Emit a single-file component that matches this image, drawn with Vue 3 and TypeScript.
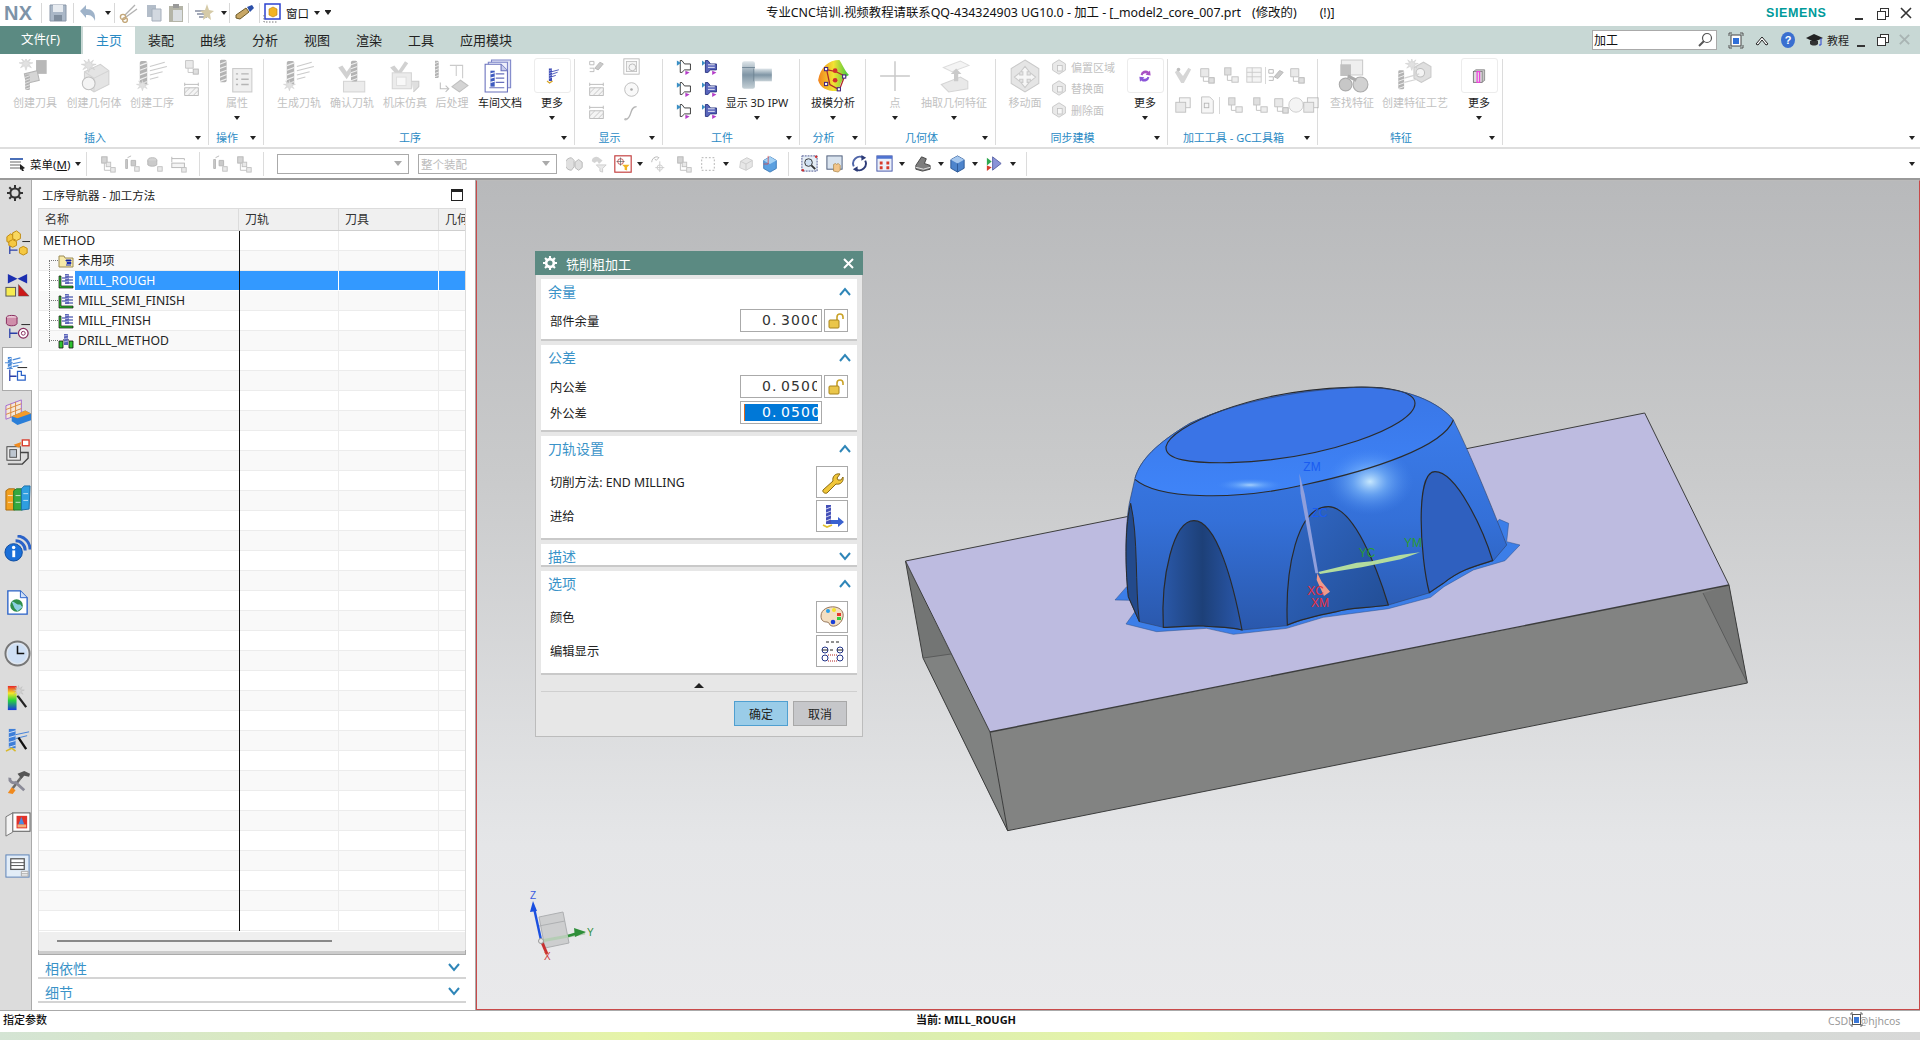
<script setup lang="ts">
type Strip = { i?: string; c?: boolean; s?: boolean; w: number; dim?: boolean }
type Big = { kind: 'big'; label: string; icon: string; w: number; dim?: boolean; caret?: boolean; boxed?: boolean; ml?: number }
type Grid = { kind: 'grid'; icons: string[]; pitch: number; rowH: number; w: number; pl: number; dim?: boolean }
type Side = { kind: 'side'; w: number; rows: { icon: string; text: string }[] }
type Rows = { kind: 'rows'; rows: Strip[][] }
type Group = { label: string; w: number; pl: number; items: (Big | Grid | Side | Rows)[] }

const tabs = ['主页', '装配', '曲线', '分析', '视图', '渲染', '工具', '应用模块']

const quick: Strip[] = [
  { s: true, w: 1 }, { i: 'save', w: 31, dim: true }, { s: true, w: 1 }, { i: 'undo', w: 28, dim: true }, { c: true, w: 12 }, { s: true, w: 1 },
  { i: 'scissors', w: 28, dim: true }, { i: 'copy', w: 21, dim: true }, { i: 'paste', w: 24, dim: true }, { s: true, w: 1 },
  { i: 'starcut', w: 30, dim: true }, { c: true, w: 10 }, { s: true, w: 1 }, { i: 'brush', w: 29 }, { s: true, w: 1 }, { i: 'window', w: 26 },
]

const groups: Group[] = [
  { label: '插入', w: 209, pl: 6, items: [
    { kind: 'big', label: '创建刀具', icon: 'g-tool', w: 58, dim: true },
    { kind: 'big', label: '创建几何体', icon: 'g-geom', w: 60, dim: true },
    { kind: 'big', label: '创建工序', icon: 'g-oper', w: 56, dim: true },
    { kind: 'grid', icons: ['s-node', 's-hatch'], pitch: 22, rowH: 23, w: 22, pl: 0, dim: true },
  ] },
  { label: '操作', w: 55, pl: 2, items: [{ kind: 'big', label: '属性', icon: 'g-prop', w: 52, dim: true, caret: true }] },
  { label: '工序', w: 311, pl: 8, items: [
    { kind: 'big', label: '生成刀轨', icon: 'g-oper', w: 54, dim: true },
    { kind: 'big', label: '确认刀轨', icon: 'g-verify', w: 52, dim: true },
    { kind: 'big', label: '机床仿真', icon: 'g-sim', w: 54, dim: true },
    { kind: 'big', label: '后处理', icon: 'g-post', w: 40, dim: true },
    { kind: 'big', label: '车间文档', icon: 'c-doc', w: 56 },
    { kind: 'big', label: '更多', icon: 'c-moreop', w: 48, boxed: true, caret: true },
  ] },
  { label: '显示', w: 88, pl: 4, items: [
    { kind: 'grid', icons: ['s-screw', 's-frame', 's-hatch', 's-target', 's-hatch', 's-curve'], pitch: 35, rowH: 23, w: 80, pl: 0, dim: true },
  ] },
  { label: '工件', w: 137, pl: 8, items: [
    { kind: 'grid', icons: ['w-a', 'w-b', 'w-a', 'w-b', 'w-a', 'w-b'], pitch: 26, rowH: 22, w: 52, pl: 0 },
    { kind: 'big', label: '显示 3D IPW', icon: 'c-ipw', w: 68, caret: true },
  ] },
  { label: '分析', w: 66, pl: 0, items: [{ kind: 'big', label: '拔模分析', icon: 'c-draft', w: 66, caret: true }] },
  { label: '几何体', w: 130, pl: 4, items: [
    { kind: 'big', label: '点', icon: 'g-plus', w: 50, dim: true, caret: true },
    { kind: 'big', label: '抽取几何特征', icon: 'g-extract', w: 68, dim: true, caret: true },
  ] },
  { label: '同步建模', w: 172, pl: 3, items: [
    { kind: 'big', label: '移动面', icon: 'g-move', w: 52, dim: true },
    { kind: 'side', w: 75, rows: [
      { icon: 's-face', text: '偏置区域' }, { icon: 's-face', text: '替换面' }, { icon: 's-face', text: '删除面' },
    ] },
    { kind: 'big', label: '更多', icon: 'c-sync', w: 38, boxed: true, caret: true },
  ] },
  { label: '加工工具 - GC工具箱', w: 150, pl: 3, items: [
    { kind: 'rows', rows: [
      [{ i: 's-check', w: 24, dim: true }, { i: 's-node', w: 24, dim: true }, { i: 's-tree', w: 23, dim: true }, { i: 's-table', w: 23, dim: true }, { s: true, w: 1 }, { i: 's-screw', w: 20, dim: true }, { i: 's-node', w: 22, dim: true }],
      [{ i: 's-copy', w: 24, dim: true }, { i: 's-sheet', w: 24, dim: true }, { s: true, w: 1 }, { i: 's-tree', w: 29, dim: true }, { i: 's-tree', w: 22, dim: true }, { i: 's-node', w: 20, dim: true }, { i: 's-clock', w: 10, dim: true }, { i: 's-copy', w: 20, dim: true }],
    ] },
  ] },
  { label: '特征', w: 185, pl: 6, items: [
    { kind: 'big', label: '查找特征', icon: 'g-find', w: 56, dim: true },
    { kind: 'big', label: '创建特征工艺', icon: 'g-feat', w: 70, dim: true },
    { kind: 'big', label: '更多', icon: 'c-box', w: 38, boxed: true, caret: true, ml: 10 },
  ] },
]

const tool1: Strip[] = [
  { i: 't-a', w: 25, dim: true }, { i: 't-b', w: 23, dim: true }, { i: 't-c', w: 24, dim: true }, { i: 't-d', w: 24, dim: true },
]
const tool2: Strip[] = [{ i: 't-b', w: 24, dim: true }, { i: 't-a', w: 24, dim: true }]
const tool3: Strip[] = [
  { i: 't-e', w: 24, dim: true }, { i: 't-f', w: 24, dim: true }, { i: 't-filter', w: 24 }, { c: true, w: 10 },
  { i: 't-rot', w: 26, dim: true }, { i: 't-a', w: 26, dim: true }, { i: 't-dash', w: 22, dim: true }, { c: true, w: 14 },
  { i: 't-cube', w: 26, dim: true }, { i: 't-blue', w: 22 },
]
const tool4: Strip[] = [
  { i: 'v-fit', w: 25 }, { i: 'v-hand', w: 25 }, { i: 'v-rot', w: 25 }, { i: 'v-grid', w: 25 }, { c: true, w: 10 },
  { i: 'v-shade', w: 30 }, { c: true, w: 8 }, { i: 'v-cube', w: 25 }, { c: true, w: 10 }, { i: 'v-mix', w: 28 }, { c: true, w: 10 },
]

const railItems = [
  { i: 'r-asm', h: 42 }, { i: 'r-con', h: 42 }, { i: 'r-part', h: 42 }, { i: 'r-op', h: 44, active: true }, { i: 'r-lib', h: 41 },
  { i: 'r-mach', h: 41 }, { i: 'r-books', h: 48 }, { i: 'r-info', h: 54 }, { i: 'r-web', h: 54 }, { i: 'r-clock', h: 48 },
  { i: 'r-rain', h: 42 }, { i: 'r-wand', h: 42 }, { i: 'r-tools', h: 42 }, { i: 'r-door', h: 42 }, { i: 'r-layout', h: 42 },
]

const treeRows = [
  { name: '未用项', icon: 'n-folder' },
  { name: 'MILL_ROUGH', icon: 'n-mill', sel: true },
  { name: 'MILL_SEMI_FINISH', icon: 'n-mill' },
  { name: 'MILL_FINISH', icon: 'n-mill' },
  { name: 'DRILL_METHOD', icon: 'n-drill' },
]
const blankRows = Array.from({ length: 29 }, (_, i) => i)
</script>

<template>
  <div class="app">
    <svg class="defs" aria-hidden="true">
      <defs>
        <linearGradient id="gBody" x1="0" y1="0" x2="0" y2="1"><stop offset="0" stop-color="#3d7ff0"/><stop offset=".55" stop-color="#3470d8"/><stop offset="1" stop-color="#2a58ac"/></linearGradient>
        <linearGradient id="gArch" x1="0" y1="0" x2="1" y2="0"><stop offset="0" stop-color="#2a58a8"/><stop offset=".5" stop-color="#1d4078"/><stop offset="1" stop-color="#2a58ac"/></linearGradient>
        <linearGradient id="gArch2" x1="0" y1="0" x2="1" y2="1"><stop offset="0" stop-color="#3168c6"/><stop offset="1" stop-color="#214c92"/></linearGradient>
        <linearGradient id="gRim" x1="0" y1="0" x2="0" y2="1"><stop offset="0" stop-color="#3976e6"/><stop offset="1" stop-color="#3f84f8"/></linearGradient>
        <radialGradient id="gHot"><stop offset="0" stop-color="#cfeeff" stop-opacity=".95"/><stop offset=".4" stop-color="#8ac4ff" stop-opacity=".55"/><stop offset="1" stop-color="#4a8cf5" stop-opacity="0"/></radialGradient>
        <linearGradient id="gSteel" x1="0" y1="0" x2="0" y2="1"><stop offset="0" stop-color="#dfe6ea"/><stop offset=".5" stop-color="#7f95a5"/><stop offset="1" stop-color="#c5d0d6"/></linearGradient>
        <linearGradient id="gDraft" x1="0" y1="0" x2="1" y2="0"><stop offset="0" stop-color="#f2821e"/><stop offset=".5" stop-color="#f3e233"/><stop offset="1" stop-color="#3ec93e"/></linearGradient>
        <linearGradient id="gRain" x1="0" y1="0" x2="0" y2="1"><stop offset="0" stop-color="#e8232a"/><stop offset=".3" stop-color="#f5e62b"/><stop offset=".6" stop-color="#27d43c"/><stop offset="1" stop-color="#1b37e0"/></linearGradient>
      </defs>

      <symbol id="cutter" viewBox="0 0 32 32"><rect x="12" y="1" width="8" height="26" rx="2" fill="#7f8598"/><path d="M12 6l8-3M12 11l8-3M12 16l8-3M12 21l8-3M12 26l8-3" stroke="#e4e6ee" stroke-width="1.3"/></symbol>
      <symbol id="burst" viewBox="0 0 32 32"><polygon points="16,1 18,9 25,4 21,11 30,12 22,15 27,22 19,18 16,27 13,18 5,22 10,15 2,12 11,11 7,4 14,9" fill="#cfcfcf" stroke="#9a9a9a" stroke-width=".8"/></symbol>
      <symbol id="g-tool" viewBox="0 0 32 32"><use href="#burst" x="0" y="-2" width="15" height="15"/><rect x="17" y="1" width="10" height="13" fill="#8d8d8d"/><path d="M6 14l12-3 2 9-12 3z" fill="#bcbcbc" stroke="#888"/><use href="#cutter" x="0" y="12" width="18" height="22"/></symbol>
      <symbol id="g-geom" viewBox="0 0 32 32"><path d="M7 12l15-7 8 6v13l-14 7-9-6z" fill="#d4d4d4" stroke="#b5b5b5"/><path d="M7 12l9 6 14-7M16 18v13" stroke="#bbb" fill="none"/><circle cx="11" cy="23" r="6" fill="#eee" stroke="#999"/><use href="#burst" x="3" y="-1" width="16" height="16"/></symbol>
      <symbol id="g-oper" viewBox="0 0 32 32"><use href="#cutter" x="-6" y="0" width="28" height="30"/><path d="M14 7l14-4M14 11l16-4M14 15l12-3M14 19l8-2" stroke="#aaa" fill="none"/><use href="#burst" x="0" y="19" width="14" height="13"/></symbol>
      <symbol id="g-prop" viewBox="0 0 32 32"><use href="#cutter" x="-10" y="0" width="26" height="26"/><rect x="12" y="9" width="18" height="22" fill="#e6e6e6" stroke="#aaa"/><path d="M15 14h2M20 14h7M15 19h2M20 19h7M15 24h2M20 24h7" stroke="#888" stroke-width="1.4"/></symbol>
      <symbol id="g-verify" viewBox="0 0 32 32"><path d="M3 8l4-2 4 6 7-10 3 2-10 15z" fill="#b5b5b5"/><rect x="8" y="21" width="20" height="10" fill="#e2e2e2" stroke="#bbb"/><use href="#cutter" x="6" y="0" width="24" height="26"/></symbol>
      <symbol id="g-sim" viewBox="0 0 32 32"><path d="M2 8l4-2 4 5 6-9 3 2-9 13z" fill="#b5b5b5"/><rect x="4" y="13" width="18" height="15" fill="#e0e0e0" stroke="#bbb"/><rect x="8" y="17" width="9" height="8" fill="#f4f4f4" stroke="#ccc"/><path d="M22 21h7v5l-5 5" fill="#ccc" stroke="#aaa"/></symbol>
      <symbol id="g-post" viewBox="0 0 32 32"><use href="#cutter" x="-9" y="0" width="20" height="22"/><path d="M14 6h12v12M20 6v10" stroke="#aaa" fill="none"/><path d="M5 22v6h7M10 25l3 3-3 3" stroke="#999" fill="none"/><path d="M16 26l8-6 7 5-8 6z" fill="#bbb" stroke="#999"/></symbol>
      <symbol id="g-plus" viewBox="0 0 32 32"><path d="M16 2v28M2 16h28" stroke="#a8a8a8" stroke-width="1.4"/></symbol>
      <symbol id="g-extract" viewBox="0 0 32 32"><path d="M6 8L22 2l8 4-16 6z" fill="#eee" stroke="#c8c8c8"/><path d="M4 24l18-7 7 4v7l-18 3z" fill="#ddd" stroke="#bbb"/><path d="M16 21v-7h-3l5-5 5 5h-3v7z" fill="#aaa"/></symbol>
      <symbol id="g-move" viewBox="0 0 32 32"><path d="M16 1l13 8v14l-13 8-13-8V9z" fill="#d6d6d6" stroke="#aaa"/><path d="M16 7l4 5h-2v3h3v-2l5 4-5 4v-2h-3v3h2l-4 5-4-5h2v-3h-3v2l-5-4 5-4v2h3v-3h-2z" fill="#f1f1f1" stroke="#aaa"/></symbol>
      <symbol id="g-find" viewBox="0 0 32 32"><path d="M6 1h20v14H6z" fill="#e6e6e6" stroke="#aaa"/><rect x="5" y="5" width="10" height="11" fill="#9a9a9a"/><circle cx="10" cy="24" r="6" fill="#a5a5a5" stroke="#777"/><circle cx="24" cy="24" r="7" fill="#b5b5b5" stroke="#777"/><path d="M12 16l8 4" stroke="#777" stroke-width="3"/></symbol>
      <symbol id="g-feat" viewBox="0 0 32 32"><path d="M15 8l9-5 7 4v10l-9 5-7-4z" fill="#ccc" stroke="#aaa"/><circle cx="21" cy="13" r="4" fill="#eee" stroke="#999"/><use href="#burst" x="6" y="-1" width="14" height="14"/><use href="#cutter" x="-8" y="10" width="22" height="22"/><path d="M6 18l14-4M6 22l12-3" stroke="#bbb"/></symbol>

      <symbol id="c-doc" viewBox="0 0 32 32"><path d="M8 1h18v26H8z" fill="#dfe2f5" stroke="#7c84c8"/><path d="M5 3h18v26H5z" fill="#eef0fb" stroke="#7c84c8"/><path d="M2 5h15l6 6v20H2z" fill="#fff" stroke="#6870bc"/><rect x="7" y="11" width="4" height="15" fill="#3f5bc0"/><path d="M7 14l4-1M7 18l4-1M7 22l4-1" stroke="#fff"/><path d="M12 14h8M12 18h8M12 22h8M6 27h14" stroke="#6870bc"/><path d="M17 5v6h6" fill="#c7ccec" stroke="#6870bc"/></symbol>
      <symbol id="c-moreop" viewBox="0 0 32 32"><rect x="11" y="4" width="5" height="20" fill="#3b49b4"/><path d="M11 8l5-2M11 12l5-2M11 16l5-2M11 20l5-2" stroke="#c9cff0"/><path d="M16 9l11-3M16 13l9-3M16 17l6-2" stroke="#3b49b4" stroke-width="1.4"/><path d="M8 24l4 3 5-3" stroke="#d9a72a" stroke-width="2" fill="none"/></symbol>
      <symbol id="c-ipw" viewBox="0 0 32 32"><rect x="2" y="2" width="12" height="26" rx="2" fill="url(#gSteel)"/><rect x="13" y="9" width="17" height="12" fill="url(#gSteel)"/><path d="M2 8h12M13 9v12" stroke="#6c8090" stroke-width=".8"/></symbol>
      <symbol id="c-draft" viewBox="0 0 32 32"><path d="M2 20C4 8 12 1 22 1c4 6 5 10 9 14-6 3-9 8-9 15C12 31 4 28 2 20z" fill="url(#gDraft)"/><path d="M10 10l9 2 8 4-5 13-9-5z" fill="none" stroke="#b02a2a" stroke-width="1.2"/><circle cx="18" cy="11" r="2.2" fill="#d22f2f"/><circle cx="18" cy="20" r="2.2" fill="#d22f2f"/><rect x="8" y="8" width="3" height="3" fill="#fff" stroke="#43267f"/><rect x="25" y="15" width="3" height="3" fill="#fff" stroke="#43267f"/><rect x="20" y="27" width="3" height="3" fill="#fff" stroke="#43267f"/><rect x="8" y="22" width="3" height="3" fill="#fff" stroke="#43267f"/></symbol>
      <symbol id="c-sync" viewBox="0 0 32 32"><path d="M9 14a8 8 0 0 1 13-5l2-2 1 8-8-1 2-2a5 5 0 0 0-7 3z" fill="#a84fc4"/><path d="M23 18a8 8 0 0 1-13 5l-2 2-1-8 8 1-2 2a5 5 0 0 0 7-3z" fill="#8a55d8"/></symbol>
      <symbol id="c-box" viewBox="0 0 32 32"><path d="M7 9l4-3h14v17l-4 3H7z" fill="#c8c8c8" stroke="#666"/><rect x="7" y="9" width="14" height="17" fill="#ddd" stroke="#666"/><path d="M13 9h4v17h-4z" fill="none" stroke="#ee44dd" stroke-width="2"/></symbol>

      <symbol id="w-a" viewBox="0 0 20 20"><path d="M5 3h2l3 4h7v7h-7l-3 3H5z" fill="#fff" stroke="#222"/><path d="M1 3l5 3-5 3z" fill="#3b8fc4"/><path d="M11 15l5 2-5 3z" fill="#b43cc8"/></symbol>
      <symbol id="w-b" viewBox="0 0 20 20"><path d="M4 3h3l3 4h7v7h-7l-3 3H4z" fill="#5965bb" stroke="#1f2a78"/><path d="M7 8h8M7 11h8" stroke="#fff"/><path d="M0 3l4 3-4 3z" fill="#3b8fc4"/><path d="M12 15l5 2-5 3z" fill="#b43cc8"/></symbol>

      <symbol id="s-node" viewBox="0 0 20 20"><path d="M3 3h9v9H3z" fill="#ddd" stroke="#999"/><path d="M6 12v5h6" stroke="#999" fill="none"/><rect x="12" y="13" width="6" height="6" fill="#ccc" stroke="#888"/></symbol>
      <symbol id="s-hatch" viewBox="0 0 20 20"><rect x="2" y="8" width="16" height="9" fill="#eee" stroke="#888"/><path d="M2 14l6-6M6 17l9-9M12 17l6-6" stroke="#999"/><path d="M2 4h16M2 2v4M18 2v4" stroke="#888"/></symbol>
      <symbol id="s-screw" viewBox="0 0 20 20"><path d="M2 4h5v4H2zM2 12h5v4H2" fill="none" stroke="#888"/><path d="M8 12l6-7 4 2-6 7z" fill="#aaa" stroke="#888"/></symbol>
      <symbol id="s-frame" viewBox="0 0 20 20"><rect x="1" y="1" width="18" height="18" fill="none" stroke="#888"/><rect x="4" y="4" width="12" height="12" fill="#eee" stroke="#999"/><circle cx="11" cy="11" r="4" fill="none" stroke="#888"/></symbol>
      <symbol id="s-target" viewBox="0 0 20 20"><circle cx="10" cy="10" r="8" fill="#f6f6f6" stroke="#888"/><circle cx="10" cy="10" r="1.5" fill="#777"/></symbol>
      <symbol id="s-curve" viewBox="0 0 20 20"><path d="M3 18c8 0 4-15 13-15" fill="none" stroke="#888" stroke-width="1.5"/><circle cx="3" cy="18" r="1.5" fill="#999"/></symbol>
      <symbol id="s-face" viewBox="0 0 20 20"><path d="M10 1l8 5v8l-8 5-8-5V6z" fill="#ddd" stroke="#999"/><rect x="8" y="8" width="6" height="7" fill="#f3f3f3" stroke="#999"/></symbol>
      <symbol id="s-check" viewBox="0 0 20 20"><path d="M1 7l3-3 6 7 6-9 3 2-8 15h-3z" fill="#bdbdbd"/><circle cx="5" cy="4" r="2" fill="#999"/></symbol>
      <symbol id="s-tree" viewBox="0 0 20 20"><rect x="3" y="2" width="7" height="8" fill="#ccc" stroke="#999"/><path d="M6 10v6h5" stroke="#999" fill="none"/><rect x="11" y="12" width="7" height="6" fill="#e4e4e4" stroke="#999"/></symbol>
      <symbol id="s-table" viewBox="0 0 20 20"><rect x="2" y="2" width="16" height="16" fill="#eee" stroke="#aaa"/><path d="M2 7h16M2 12h16M8 2v16" stroke="#aaa"/></symbol>
      <symbol id="s-copy" viewBox="0 0 20 20"><rect x="6" y="2" width="12" height="11" fill="#eee" stroke="#999"/><rect x="2" y="7" width="11" height="11" fill="#ddd" stroke="#999"/></symbol>
      <symbol id="s-sheet" viewBox="0 0 20 20"><path d="M4 1h9l4 4v14H4z" fill="#f2f2f2" stroke="#999"/><rect x="7" y="8" width="5" height="5" fill="none" stroke="#888"/></symbol>
      <symbol id="s-clock" viewBox="0 0 20 20"><circle cx="10" cy="10" r="8" fill="#eee" stroke="#aaa"/></symbol>

      <symbol id="save" viewBox="0 0 20 20"><path d="M2 2h16v16H2z" fill="#8ea0b5" stroke="#63758c"/><rect x="5" y="2" width="10" height="7" fill="#dfe5ec"/><rect x="6" y="12" width="8" height="6" fill="#55677d"/></symbol>
      <symbol id="undo" viewBox="0 0 20 20"><path d="M2 8l6-6v4c6 0 10 3 9 12-2-5-4-6-9-6v3z" fill="#7f9ab8"/></symbol>
      <symbol id="scissors" viewBox="0 0 20 20"><path d="M16 2L6 12M18 6L7 14" stroke="#999" stroke-width="1.4"/><circle cx="4" cy="14" r="2.6" fill="none" stroke="#b08a4e" stroke-width="1.4"/><circle cx="6" cy="17" r="2.4" fill="none" stroke="#b08a4e" stroke-width="1.4"/></symbol>
      <symbol id="copy" viewBox="0 0 20 20"><path d="M3 2h9v12H3z" fill="#9aa7b8"/><path d="M8 6h9v12H8z" fill="#c3ccd6" stroke="#8794a5"/></symbol>
      <symbol id="paste" viewBox="0 0 20 20"><rect x="3" y="3" width="14" height="16" fill="#9c9c8a"/><rect x="7" y="1" width="6" height="4" fill="#777"/><rect x="7" y="7" width="9" height="11" fill="#ced3d8"/></symbol>
      <symbol id="starcut" viewBox="0 0 20 20"><path d="M1 8h10M3 11h10M5 14h8" stroke="#5d6a82" stroke-width="1.4"/><polygon points="13,1 15,7 20,8 16,11 17,17 13,14 9,17 10,11 6,8 11,7" fill="#c8b98a"/></symbol>
      <symbol id="brush" viewBox="0 0 20 20"><path d="M1 12L11 5l3 4-9 7-4-1z" fill="#c8a765" stroke="#6d5a2a"/><path d="M12 4l5-2 2 3-4 4z" fill="#2b4fa8"/></symbol>
      <symbol id="window" viewBox="0 0 20 20"><rect x="2" y="1" width="15" height="15" fill="#fff" stroke="#2b42d0" stroke-width="1.5"/><path d="M6 6l4-2 4 2v6l-4 2-4-2z" fill="#f2b423" stroke="#b57d10" stroke-width=".6"/><path d="M1 12v7h14" fill="none" stroke="#777" stroke-dasharray="1.5 1.5"/></symbol>

      <symbol id="t-a" viewBox="0 0 20 20"><rect x="3" y="2" width="6" height="7" fill="#bbb" stroke="#888"/><rect x="8" y="8" width="5" height="5" fill="#ddd" stroke="#999"/><rect x="13" y="14" width="5" height="5" fill="#ddd" stroke="#999"/><path d="M6 9v8h7" stroke="#999" fill="none"/></symbol>
      <symbol id="t-b" viewBox="0 0 20 20"><path d="M3 15V5h2v10zM9 6h5v6H9z" fill="#aaa" stroke="#888"/><rect x="13" y="13" width="5" height="5" fill="#ddd" stroke="#999"/><path d="M5 3l4-2" stroke="#888"/></symbol>
      <symbol id="t-c" viewBox="0 0 20 20"><ellipse cx="7" cy="6" rx="5" ry="3" fill="#bbb" stroke="#888"/><path d="M2 6v5c2 2 8 2 10 0V6" fill="#aaa" stroke="#888"/><rect x="13" y="13" width="5" height="5" fill="#ddd" stroke="#999"/></symbol>
      <symbol id="t-d" viewBox="0 0 20 20"><path d="M2 4h14v2M2 2v6" stroke="#888" fill="none"/><rect x="2" y="9" width="14" height="5" fill="#eee" stroke="#888"/><rect x="13" y="14" width="5" height="5" fill="#ddd" stroke="#999"/></symbol>
      <symbol id="t-e" viewBox="0 0 20 20"><path d="M6 3a5 5 0 0 0 0 14l3-4V6zM14 5l4 3v6l-4 3-4-3V8z" fill="#ccc" stroke="#888"/></symbol>
      <symbol id="t-f" viewBox="0 0 20 20"><path d="M2 7a5 5 0 0 1 9-3l3 2-4 4-2-3-3 2z" fill="#bbb"/><path d="M7 11h11l-4 4v4l-3-1v-3z" fill="#ddd" stroke="#aaa"/></symbol>
      <symbol id="t-filter" viewBox="0 0 22 22"><rect x="1" y="1" width="20" height="20" fill="#fff" stroke="#c33c3c" stroke-width="1.4"/><circle cx="8" cy="8" r="3.5" fill="none" stroke="#c33c3c"/><path d="M8 3v10M3 8h10" stroke="#555" stroke-width=".8"/><path d="M10 12h9l-3 3v4l-3-1v-3z" fill="#f2b423"/></symbol>
      <symbol id="t-rot" viewBox="0 0 20 20"><path d="M3 8a6 6 0 0 1 6-6l2 1-3 3-2-2" fill="none" stroke="#888"/><path d="M12 7v12M7 14h10" stroke="#aaa"/><circle cx="12" cy="14" r="3" fill="none" stroke="#aaa"/></symbol>
      <symbol id="t-dash" viewBox="0 0 20 20"><rect x="3" y="3" width="14" height="14" fill="none" stroke="#777" stroke-dasharray="2 2"/></symbol>
      <symbol id="t-cube" viewBox="0 0 20 20"><path d="M4 7l7-4 6 3v7l-7 4-7-3z" fill="#d8d8d8" stroke="#aaa"/><path d="M4 7l6 3 7-4M10 10v7" stroke="#aaa" fill="none"/></symbol>
      <symbol id="t-blue" viewBox="0 0 20 20"><path d="M3 6l7-4 7 4v9l-7 4-7-4z" fill="#5ba0e0" stroke="#3a78b8"/><path d="M3 6l7 4 7-4-7-4z" fill="#a5d2f5"/><path d="M8 1v9M8 10H3" stroke="#d84040" stroke-width=".8"/></symbol>
      <symbol id="v-fit" viewBox="0 0 20 20"><rect x="2" y="2" width="16" height="16" fill="#e5edf5" stroke="#4a5590" stroke-dasharray="2 1"/><circle cx="9" cy="9" r="4" fill="#cfe0f2" stroke="#333"/><path d="M12 12l4 4" stroke="#333" stroke-width="2"/><circle cx="3" cy="17" r="1.3" fill="#d03030"/><circle cx="17" cy="3" r="1.3" fill="#d03030"/></symbol>
      <symbol id="v-hand" viewBox="0 0 20 20"><rect x="2" y="2" width="16" height="14" fill="#d9e3ee" stroke="#4a5a78"/><path d="M9 18v-7l2-1 1 1 2-1 2 2v5l-2 2z" fill="#f2c58a" stroke="#a67e3e" stroke-width=".7"/></symbol>
      <symbol id="v-rot" viewBox="0 0 20 20"><path d="M4 13A7 7 0 0 1 14 4" fill="none" stroke="#4f65a8" stroke-width="2"/><path d="M16 7A7 7 0 0 1 6 16" fill="none" stroke="#2d3c78" stroke-width="2"/><path d="M12 1l5 3-5 3zM8 13v6l-5-3z" fill="#2d3c78"/></symbol>
      <symbol id="v-grid" viewBox="0 0 20 20"><rect x="2" y="2" width="16" height="16" fill="#eaf0fa" stroke="#4455a8"/><rect x="2" y="2" width="16" height="3" fill="#4f73d0"/><path d="M5 8h3v3H5zM12 8h3v3h-3zM5 13h3v3H5zM12 13h3v3h-3z" fill="#d83a2a"/></symbol>
      <symbol id="v-shade" viewBox="0 0 20 20"><path d="M3 12l6-9 5 2-2 5 6 2v4l-8 2-7-2z" fill="#7d7d7d" stroke="#444"/><path d="M3 14l8 2 7-2" fill="none" stroke="#e6e6e6"/></symbol>
      <symbol id="v-cube" viewBox="0 0 20 20"><path d="M3 6l7-4 7 4v9l-7 4-7-4z" fill="#4d84cc" stroke="#2d5a98"/><path d="M3 6l7 4 7-4-7-4z" fill="#a7c8ee"/><path d="M10 10v9" stroke="#2d5a98"/></symbol>
      <symbol id="v-mix" viewBox="0 0 20 20"><path d="M8 3l9 7-9 7z" fill="#8a93d8" stroke="#5c65a8"/><path d="M2 4l5 4-5 4z" fill="#2fa84f"/><path d="M2 12l5 2-5 4z" fill="#d83a2a"/></symbol>

      <symbol id="r-asm" viewBox="0 0 28 28"><path d="M3 8l4-3 4 3v5l-4 2-4-2z" fill="#f5c842" stroke="#c08a10"/><path d="M9 4l4-2 4 3v5l-4 2-4-2z" fill="#f8d860" stroke="#c08a10"/><path d="M9 11l4 2v4l-4 2-4-2v-4z" fill="#f5c842" stroke="#c08a10"/><path d="M19 13h8" stroke="#222"/><path d="M6 18v8M6 22h8" stroke="#2a3fa8" stroke-width="1.3"/><path d="M16 20l4-2 4 2v5l-4 2-4-2z" fill="#f5c842" stroke="#c08a10"/></symbol>
      <symbol id="r-con" viewBox="0 0 28 28"><path d="M4 3v10l10-5 10 5V3L14 8z" fill="#1c2fb0"/><rect x="2" y="17" width="10" height="9" fill="#f7ec51" stroke="#555"/><path d="M15 14l11 12H15z" fill="#cc1818" stroke="#555" stroke-width=".5"/></symbol>
      <symbol id="r-part" viewBox="0 0 28 28"><ellipse cx="8" cy="5" rx="5.5" ry="2.5" fill="#e8c7d4" stroke="#862a5c"/><path d="M2.5 5v6c1 3 10 3 11 0V5" fill="#cf8eaa" stroke="#862a5c"/><path d="M18 12h9" stroke="#222"/><path d="M6 16v10M6 21h8" stroke="#2a3fa8" stroke-width="1.3"/><circle cx="20" cy="21" r="5" fill="#fff" stroke="#862a5c" stroke-width="1.3"/><circle cx="20" cy="21" r="2" fill="none" stroke="#862a5c"/></symbol>
      <symbol id="r-op" viewBox="0 0 28 28"><rect x="4" y="1" width="4" height="12" fill="#4a8ad8"/><path d="M4 4l4-2M4 8l4-2M4 12l4-2" stroke="#fff" stroke-width=".8"/><path d="M1 7h8M3 13h6" stroke="#4a8ad8"/><path d="M9 4l8-2M9 8l10-2M9 11l6-1" stroke="#4a8ad8" stroke-width="1.2"/><path d="M14 12h10" stroke="#222"/><path d="M6 14v12M6 21h7" stroke="#2a3fa8" stroke-width="1.3"/><path d="M14 16h4v4h4v5h-8z" fill="#fff" stroke="#2a62c8" stroke-width="1.3"/></symbol>
      <symbol id="r-lib" viewBox="0 0 28 28"><path d="M2 8l16-6v14L2 22z" fill="#f5e8d8" stroke="#a46ad0"/><path d="M2 12l16-6M2 17l16-6M7 6v14M12 4v14" stroke="#d88a40"/><path d="M8 19l14-6 6 3v7l-14 5-6-4z" fill="#2a7ed8"/><path d="M8 19l14-6 6 3-14 5z" fill="#f39a2a"/></symbol>
      <symbol id="r-mach" viewBox="0 0 28 28"><rect x="3" y="8" width="14" height="14" fill="#e8e8e8" stroke="#444"/><rect x="6" y="11" width="7" height="8" fill="#bdc6d0" stroke="#555"/><path d="M17 14h8v6l-6 6H4" fill="none" stroke="#444" stroke-width="1.4"/><rect x="19" y="1" width="7" height="6" fill="#fff" stroke="#d83a2a" stroke-width="1.4"/><path d="M10 6l8-3-2 6-3-1z" fill="#f08a1e"/></symbol>
      <symbol id="r-books" viewBox="0 0 28 28"><path d="M2 7l3-2h6v22H2z" fill="#f2a01f" stroke="#a86a10"/><path d="M10 7l3-2h6v22h-9z" fill="#35a83f" stroke="#1f7a2a"/><path d="M18 5l3-3h6l-1 24-8 1z" fill="#2f9ee0" stroke="#1a6ca8"/><path d="M4 12h5M12 12h5M20 10h5M4 19h5M12 19h5M20 17h5" stroke="#fff" stroke-opacity=".7"/></symbol>
      <symbol id="r-info" viewBox="0 0 28 28"><circle cx="10" cy="18" r="9" fill="#1a6fd8" stroke="#0c4a9e"/><rect x="8.6" y="16" width="3" height="7" fill="#fff"/><circle cx="10" cy="13" r="1.8" fill="#fff"/><path d="M12 6a10 10 0 0 1 10 10M14 1a14 14 0 0 1 13 14" fill="none" stroke="#2b62c8" stroke-width="3"/></symbol>
      <symbol id="r-web" viewBox="0 0 28 28"><path d="M4 2h13l7 7v17H4z" fill="#fff" stroke="#2a62c8" stroke-width="1.4"/><path d="M17 2v7h7" fill="#cfe0f8" stroke="#2a62c8"/><circle cx="13" cy="17" r="6.5" fill="#2f8f4a"/><path d="M8 13c4 0 4 4 9 3l2 3-5 4-3-3z" fill="#8ccfe0"/></symbol>
      <symbol id="r-clock" viewBox="0 0 28 28"><circle cx="14" cy="14" r="12.5" fill="#dfe6f0" stroke="#777" stroke-width="2"/><circle cx="14" cy="14" r="10" fill="#cfe0f5"/><path d="M14 6v8h7" fill="none" stroke="#111" stroke-width="1.6"/></symbol>
      <symbol id="r-rain" viewBox="0 0 28 28"><rect x="4" y="1" width="9" height="25" fill="url(#gRain)"/><path d="M14 11l9 12" stroke="#222" stroke-width="2.4"/><use href="#burst" x="8" y="0" width="14" height="14" opacity=".7"/></symbol>
      <symbol id="r-wand" viewBox="0 0 28 28"><rect x="5" y="2" width="7" height="20" fill="#3f7fd8"/><path d="M5 6l7-2M5 11l7-2M5 16l7-2M5 21l7-2" stroke="#fff" stroke-width=".8"/><path d="M12 8l14-3M12 12l12-3" stroke="#3f7fd8"/><path d="M15 11l8 12" stroke="#111" stroke-width="2.4"/><path d="M2 25l6-3 4 3" stroke="#d9b92a" stroke-width="1.6" fill="none"/></symbol>
      <symbol id="r-tools" viewBox="0 0 28 28"><path d="M9 20L19 7" stroke="#6b6b6b" stroke-width="2.6"/><path d="M14 5l7-3 6 3-1 3-5-1-3 3z" fill="#555"/><path d="M6 9a4.5 4.5 0 0 0 6 5l9 8" stroke="#8b8b98" stroke-width="3" fill="none"/><path d="M4 25l4-6 4 3-3 4z" fill="#f08a1e"/></symbol>
      <symbol id="r-door" viewBox="0 0 28 28"><rect x="9" y="2" width="18" height="19" fill="#fff" stroke="#555"/><rect x="13" y="5" width="11" height="13" fill="#e2332a"/><path d="M15 14l3-8 3 8z" fill="#4a8ce0"/><rect x="14" y="14" width="9" height="3" fill="#f2b07a"/><path d="M2 6l7-4v20l-7 4z" fill="#f4f4f4" stroke="#777"/></symbol>
      <symbol id="r-layout" viewBox="0 0 28 28"><rect x="2" y="2" width="24" height="23" fill="#e2edf8" stroke="#5a82b8"/><rect x="7" y="6" width="14" height="11" fill="#fff" stroke="#555" stroke-width="1.3"/><path d="M7 10h14M7 13h14" stroke="#555"/><path d="M18 19h7v5h-7zM18 21.5h7" fill="#f2f2f2" stroke="#aaa"/></symbol>

      <symbol id="n-folder" viewBox="0 0 16 16"><path d="M1 3h5l1 2h8v9H1z" fill="#f6e9a8" stroke="#9b8a55"/><path d="M8 7h5v1h-5zM9 9.5h4v1H9zM8 12h5" stroke="#1a2fb8"/></symbol>
      <symbol id="n-mill" viewBox="0 0 16 16"><path d="M1 3v12h14v-2H3V3z" fill="#2fc02f" stroke="#111" stroke-width=".7"/><rect x="7" y="1" width="4" height="10" fill="#5a63b8"/><path d="M7 3l4-1M7 6l4-1M7 9l4-1" stroke="#d5d8f0" stroke-width=".7"/><path d="M4 5h3M4 8h3M11 4h4M11 7h4M11 10h4" stroke="#1f2f98"/></symbol>
      <symbol id="n-drill" viewBox="0 0 16 16"><path d="M1 8h4v7H1zM11 8h4v7h-4z" fill="#2fc02f" stroke="#111" stroke-width=".8"/><path d="M5 7h6" stroke="#111"/><rect x="6" y="1" width="4" height="11" fill="#5a63b8"/><path d="M6 3l4-1M6 6l4-1M6 9l4-1" stroke="#d5d8f0" stroke-width=".7"/></symbol>
    </svg>

    <header class="titlebar">
      <span class="nx">NX</span>
      <template v-for="(q, n) in quick" :key="n">
        <span v-if="q.s" class="vsep"></span>
        <span v-else class="slot" :style="{ width: q.w + 'px' }">
          <i v-if="q.c" class="caret"></i>
          <svg v-else :class="{ qdim: q.dim }" width="20" height="20"><use :href="'#' + q.i" /></svg>
        </span>
      </template>
      <span class="win-label">窗口</span>
      <i class="caret win-caret"></i>
      <span class="win-more"><i class="caret"></i></span>
      <span class="doc-title">专业CNC培训.视频教程请联系QQ-434324903 UG10.0 - 加工 - [_model2_core_007.prt<span class="gap1">(修改的)</span><span class="gap2">(!)]</span></span>
      <span class="siemens">SIEMENS</span>
      <span class="ctl min"></span>
      <span class="ctl rest"><i></i></span>
      <svg class="ctl-x" width="14" height="14" viewBox="0 0 14 14"><path d="M2 2l10 10M12 2L2 12" stroke="#333" stroke-width="1.6"/></svg>
    </header>

    <nav class="tabbar">
      <span class="file-tab">文件(F)</span>
      <span v-for="(t, n) in tabs" :key="t" class="tab" :class="{ on: n === 0 }">{{ t }}</span>
      <div class="tab-right">
        <div class="search">
          <span>加工</span>
          <svg width="16" height="16" viewBox="0 0 16 16"><circle cx="10" cy="6" r="4.5" fill="#fff" stroke="#555" stroke-width="1.2"/><path d="M7 9l-5 5" stroke="#555" stroke-width="2"/></svg>
        </div>
        <svg class="tr1" width="16" height="17" viewBox="0 0 16 17"><path d="M1 4V1h3M12 1h3v3M1 13v3h3M12 16h3v-3" stroke="#555" fill="none"/><rect x="3" y="3" width="10" height="11" fill="#fff" stroke="#444"/><rect x="5" y="6" width="6" height="6" fill="#2f6fd8"/></svg>
        <svg class="tr2" width="14" height="12" viewBox="0 0 14 12"><path d="M1 10l6-7 6 7-2 1-4-5-4 5z" fill="#fff" stroke="#222"/></svg>
        <svg class="tr3" width="14" height="16" viewBox="0 0 14 16"><ellipse cx="7" cy="8" rx="7" ry="8" fill="#3a6fd0"/><text x="7" y="12" font-size="11" font-weight="700" fill="#fff" text-anchor="middle" font-family="Liberation Sans">?</text></svg>
        <svg class="tr4" width="17" height="14" viewBox="0 0 17 14"><path d="M0 5l8-4 9 4-9 4z" fill="#222"/><path d="M4 8v3c2 2 6 2 8 0V8" fill="#333"/><path d="M15 5v7h-2" stroke="#2b42d0" fill="none"/></svg>
        <span class="tut">教程</span>
        <span class="ctl min m2"></span>
        <span class="ctl rest r2"><i></i></span>
        <svg class="x2" width="13" height="13" viewBox="0 0 14 14"><path d="M2 2l10 10M12 2L2 12" stroke="#a9b4b3" stroke-width="2"/></svg>
      </div>
    </nav>

    <section class="ribbon">
      <div v-for="g in groups" :key="g.label" class="rb-group" :style="{ width: g.w + 'px' }">
        <div class="rb-body" :style="{ paddingLeft: g.pl + 'px' }">
          <template v-for="(it, n) in g.items" :key="n">
            <div v-if="it.kind === 'big'" class="big" :class="{ dimmed: it.dim }" :style="{ width: it.w + 'px', marginLeft: (it.ml || 0) + 'px' }">
              <div class="big-ic" :class="{ boxed: it.boxed }">
                <svg :width="it.boxed ? 20 : 34" :height="it.boxed ? 20 : 34"><use :href="'#' + it.icon" /></svg>
              </div>
              <span class="big-tx">{{ it.label }}</span>
              <i v-if="it.caret" class="caret big-c"></i>
            </div>
            <div v-else-if="it.kind === 'grid'" class="grid" :class="{ dimmed: it.dim }" :style="{ width: it.w + 'px', gridTemplateColumns: `repeat(auto-fill, ${it.pitch}px)`, gridAutoRows: it.rowH + 'px' }">
              <span v-for="(ic, k) in it.icons" :key="k" class="cell"><svg width="17" height="17"><use :href="'#' + ic" /></svg></span>
            </div>
            <div v-else-if="it.kind === 'side'" class="side dimmed" :style="{ width: it.w + 'px' }">
              <div v-for="r in it.rows" :key="r.text" class="side-row">
                <svg width="16" height="16"><use :href="'#' + r.icon" /></svg><span>{{ r.text }}</span>
              </div>
            </div>
            <div v-else class="mini">
              <div v-for="(row, k) in it.rows" :key="k" class="mini-row">
                <template v-for="(m, j) in row" :key="j">
                  <span v-if="m.s" class="vsep light"></span>
                  <span v-else class="slot dimmed" :style="{ width: m.w + 'px' }"><svg width="18" height="18"><use :href="'#' + m.i" /></svg></span>
                </template>
              </div>
            </div>
          </template>
        </div>
        <div class="rb-label"><span>{{ g.label }}</span><i class="caret"></i></div>
      </div>
      <i class="caret rb-end"></i>
    </section>

    <section class="toolbar">
      <div class="tb-sec menu">
        <svg width="18" height="16" viewBox="0 0 18 16"><path d="M1 2h13v2H1z" fill="#4a6fb8"/><path d="M1 6h11M1 9h10M1 12h12" stroke="#666"/><path d="M11 8l5 4-2 1 1 2-2 0-1-2-1 1z" fill="#222"/></svg>
        <span class="menu-tx">菜单(<u>M</u>)</span><i class="caret"></i>
      </div>
      <div class="tb-sec s2">
        <span v-for="(t, n) in tool1" :key="n" class="slot dimmed" :style="{ width: t.w + 'px' }"><svg width="18" height="18"><use :href="'#' + t.i" /></svg></span>
      </div>
      <div class="tb-sec s3">
        <span v-for="(t, n) in tool2" :key="n" class="slot dimmed" :style="{ width: t.w + 'px' }"><svg width="18" height="18"><use :href="'#' + t.i" /></svg></span>
      </div>
      <div class="tb-sec s4">
        <div class="select sel1"><i class="sel-c"></i></div>
        <div class="select sel2"><span>整个装配</span><i class="sel-c"></i></div>
        <template v-for="(t, n) in tool3" :key="n">
          <span class="slot" :class="{ dimmed: t.dim }" :style="{ width: t.w + 'px' }">
            <i v-if="t.c" class="caret"></i>
            <svg v-else width="18" height="18"><use :href="'#' + t.i" /></svg>
          </span>
        </template>
      </div>
      <div class="tb-sec s5">
        <span v-for="(t, n) in tool4" :key="n" class="slot" :style="{ width: t.w + 'px' }">
          <i v-if="t.c" class="caret"></i>
          <svg v-else width="19" height="19"><use :href="'#' + t.i" /></svg>
        </span>
      </div>
      <i class="caret tb-end"></i>
    </section>

    <main class="work">
      <aside class="rail">
        <svg class="rail-gear" width="16" height="16" viewBox="0 0 16 16"><circle cx="8" cy="8" r="4.6" fill="none" stroke="#333" stroke-width="2"/><path d="M8 0v3M8 13v3M0 8h3M13 8h3M2.3 2.3l2 2M11.7 11.7l2 2M2.3 13.7l2-2M11.7 4.3l2-2" stroke="#333" stroke-width="2"/></svg>
        <div v-for="r in railItems" :key="r.i" class="rail-item" :class="{ active: r.active }" :style="{ height: r.h + 'px' }">
          <svg width="27" height="27"><use :href="'#' + r.i" /></svg>
        </div>
      </aside>

      <div class="nav">
        <div class="nav-head">
          <span>工序导航器 - 加工方法</span>
          <i class="maxbox"></i>
        </div>
        <div class="table">
          <div class="thead">
            <span class="c1">名称</span><span class="c2">刀轨</span><span class="c2">刀具</span><span class="c3">几何</span>
          </div>
          <div class="tbody">
            <div class="row">
              <span class="c1 root">METHOD</span><span class="c2"></span><span class="c2"></span><span class="c3"></span>
            </div>
            <div v-for="t in treeRows" :key="t.name" class="row" :class="{ sel: t.sel }">
              <span class="c1 node">
                <i class="twig"></i>
                <svg width="16" height="16"><use :href="'#' + t.icon" /></svg>
                <span class="node-tx">{{ t.name }}</span>
              </span>
              <span class="c2"></span><span class="c2"></span><span class="c3"></span>
            </div>
            <div v-for="b in blankRows" :key="b" class="row">
              <span class="c1"></span><span class="c2"></span><span class="c2"></span><span class="c3"></span>
            </div>
            <i class="tree-v"></i>
            <i class="black-line"></i>
          </div>
          <div class="hscroll"><i></i></div>
        </div>
        <div class="splitter"></div>
        <div class="fold">
          <span>相依性</span>
          <svg width="12" height="9" viewBox="0 0 12 9"><path d="M1 1l5 6 5-6" fill="none" stroke="#2f86b8" stroke-width="2"/></svg>
        </div>
        <div class="fold">
          <span>细节</span>
          <svg width="12" height="9" viewBox="0 0 12 9"><path d="M1 1l5 6 5-6" fill="none" stroke="#2f86b8" stroke-width="2"/></svg>
        </div>
      </div>

      <div class="view">
        <svg class="scene" width="1444" height="830" viewBox="476 180 1444 830">
          <!-- plate -->
          <polygon points="905.5,561 990,732 1007.6,830.7 923,658" fill="#737574"/>
          <polygon points="923,658 951,654 990,732 1007.6,830.7" fill="#808281"/>
          <polygon points="990,732 1729,585 1747.4,683 1007.6,830.7" fill="#828382"/>
          <polygon points="1729,585 1703,593 1747.4,683" fill="#757675"/>
          <polygon points="905.5,561 1644.7,413 1729,585 990,732" fill="#bdbbe0"/>
          <g fill="none" stroke="#3c3d3d" stroke-width="1">
            <path d="M905.5 561L1644.7 413L1729 585L1747.4 683L1007.6 830.7L990 732L905.5 561L923 658L1007.6 830.7"/>
            <path d="M990 732L1729 585" stroke-width="1.4"/>
            <path d="M923 658L951 654M1703 593L1747.4 683" stroke="#5a5b5b"/>
          </g>

          <!-- bowl, drawn at 3x local scale -->
          <g transform="translate(1090 370) scale(.33333)">
            <path d="M75 690L110 650L118 682L142 715L108 762L200 785L350 775L430 793L590 775L700 742L895 716L1022 682L1062 650L1150 600L1245 572L1290 525L1250 515L1256 460L1228 448L1100 600L600 700Z" fill="#3c7ee8" stroke="#2d4f88" stroke-width="1.5"/>
            <path d="M135 325C150 270 200 220 300 160C450 90 640 60 800 52C950 48 1050 100 1090 150C1130 230 1190 370 1250 525L1210 572C1150 590 1110 600 1060 640L1020 668L895 705C830 715 780 712 740 725C690 735 640 745 590 767L455 780C420 770 380 772 340 768C300 766 260 772 220 772L148 755L115 682C105 590 105 470 118 400Z" fill="url(#gBody)" stroke="#30466e" stroke-width="2"/>
            <path d="M115 680C104 580 106 460 122 400C145 500 135 650 148 755Z" fill="#234a8c" stroke="#2a2a2a" stroke-width="3"/>
            <path d="M220 772C212 620 250 452 312 452C380 452 430 640 456 780C420 770 380 772 340 768C300 766 260 772 220 772Z" fill="url(#gArch)" stroke="#2a2a2a" stroke-width="3.5"/>
            <path d="M592 765C585 600 620 410 715 410C790 410 860 590 895 705C830 715 780 712 740 725C690 735 640 745 592 765Z" fill="url(#gArch2)" stroke="#2a2a2a" stroke-width="3.5"/>
            <path d="M1018 668C990 560 975 305 1035 305C1100 305 1180 480 1208 572C1150 590 1110 600 1060 640Z" fill="#2f60bf" stroke="#2a2a2a" stroke-width="3.5"/>
            <path d="M135 328C150 270 200 220 300 160C450 90 640 60 800 52C950 48 1050 100 1090 150C1060 230 850 300 640 345C420 395 200 385 135 328Z" fill="url(#gRim)"/>
            <ellipse cx="840" cy="335" rx="130" ry="100" fill="url(#gHot)"/>
            <ellipse cx="480" cy="345" rx="100" ry="20" fill="url(#gHot)" opacity=".75"/>
            <path d="M228 230C240 170 480 60 780 52C900 48 975 65 975 100C975 170 700 270 420 278C300 280 225 270 228 230Z" fill="#3a74e6" stroke="#2c2c2c" stroke-width="3.5"/>
            <path d="M135 328C200 385 420 395 640 345C850 300 1060 230 1090 150" fill="none" stroke="#2c2c2c" stroke-width="3.5"/>
            <path d="M135 325C150 270 200 220 300 160C450 90 640 60 800 52C950 48 1050 100 1090 150" fill="none" stroke="#30466e" stroke-width="2"/>

            <path d="M628 310L644 372L685 610L676 610L632 372Z" fill="#8f9fdc"/>
            <path d="M685 606L800 578L845 574L930 555L990 547L932 568L815 592L690 612Z" fill="#b3dc9e"/>
            <path d="M682 610L695 635L720 665L702 678L680 630Z" fill="#ee9a8a"/>
            <g font-family="Liberation Sans, sans-serif" font-size="36">
              <text x="640" y="304" fill="#1a5cf0">ZM</text>
              <text x="665" y="442" fill="#1a5cf0">ZC</text>
              <text x="806" y="562" fill="#2a9a34">YC</text>
              <text x="942" y="532" fill="#2a9a34">YM</text>
              <text x="652" y="676" fill="#e8303f">XC</text>
              <text x="663" y="710" fill="#e8303f">XM</text>
            </g>
          </g>

          <!-- absolute triad -->
          <g>
            <path d="M539 917L563 912L569 943L545 948Z" fill="#cdcecf" stroke="#aeb0b2"/>
            <path d="M539 926L565 921" stroke="#aeb0b2"/>
            <path d="M541 941L585 933" stroke="#b5cdb5" stroke-width="3"/>
            <path d="M541 940L534 908" stroke="#1a4fe0" stroke-width="2.4"/>
            <path d="M533 901L537 911L530 912Z" fill="#1a4fe0"/>
            <path d="M568 936L578 933" stroke="#2f8f3a" stroke-width="2.4"/>
            <path d="M586 932L575 937L574 928Z" fill="#2f8f3a"/>
            <path d="M541 940L547 954" stroke="#c83030" stroke-width="3"/>
            <circle cx="541" cy="941" r="2.5" fill="#e8e8e8" stroke="#999"/>
            <g font-family="Liberation Sans, sans-serif" font-size="10">
              <text x="530" y="899" fill="#3a5be0">Z</text>
              <text x="587" y="936" fill="#2f8f3a">Y</text>
              <text x="544" y="960" fill="#d04040">X</text>
            </g>
          </g>
        </svg>

        <div class="dialog">
          <div class="dlg-title">
            <svg width="14" height="14" viewBox="0 0 16 16"><circle cx="8" cy="8" r="4.4" fill="none" stroke="#fff" stroke-width="3"/><path d="M8 0v3M8 13v3M0 8h3M13 8h3M2.3 2.3l2 2M11.7 11.7l2 2M2.3 13.7l2-2M11.7 4.3l2-2" stroke="#fff" stroke-width="2.4"/></svg>
            <span>铣削粗加工</span>
            <svg class="dlg-x" width="11" height="11" viewBox="0 0 11 11"><path d="M1 1l9 9M10 1l-9 9" stroke="#fff" stroke-width="2"/></svg>
          </div>

          <div class="card c-yu">
            <div class="card-h"><span>余量</span><svg width="12" height="9" viewBox="0 0 12 9"><path d="M1 8l5-6 5 6" fill="none" stroke="#2f86b8" stroke-width="2"/></svg></div>
            <div class="line l1"><label>部件余量</label><span class="num"><b>0. 30000</b></span><button class="sq lock"><svg width="18" height="18" viewBox="0 0 18 18"><path d="M10 8V5a3 3 0 0 1 6 0v2" fill="none" stroke="#c9a227" stroke-width="1.6"/><rect x="2" y="8" width="10" height="8" rx="1" fill="#eac64a" stroke="#a8841c"/></svg></button></div>
          </div>

          <div class="card c-gc">
            <div class="card-h"><span>公差</span><svg width="12" height="9" viewBox="0 0 12 9"><path d="M1 8l5-6 5 6" fill="none" stroke="#2f86b8" stroke-width="2"/></svg></div>
            <div class="line l1"><label>内公差</label><span class="num"><b>0. 05000</b></span><button class="sq lock"><svg width="18" height="18" viewBox="0 0 18 18"><path d="M10 8V5a3 3 0 0 1 6 0v2" fill="none" stroke="#c9a227" stroke-width="1.6"/><rect x="2" y="8" width="10" height="8" rx="1" fill="#eac64a" stroke="#a8841c"/></svg></button></div>
            <div class="line l2"><label>外公差</label><span class="num on"><b>0. 05000</b></span></div>
          </div>

          <div class="card c-dg">
            <div class="card-h"><span>刀轨设置</span><svg width="12" height="9" viewBox="0 0 12 9"><path d="M1 8l5-6 5 6" fill="none" stroke="#2f86b8" stroke-width="2"/></svg></div>
            <div class="line big-l"><label>切削方法: END MILLING</label><button class="sq big-b"><svg width="24" height="24" viewBox="0 0 24 24"><path d="M3 20l10-9c-1-4 2-8 7-7l-3 4 1 2 3 0 2-3c1 5-3 8-7 7l-9 9c-2 1-5-1-4-3z" fill="#f0c63a" stroke="#8a6a12"/></svg></button></div>
            <div class="line big-l g1"><label>进给</label><button class="sq big-b"><svg width="26" height="26" viewBox="0 0 26 26"><rect x="7" y="2" width="5" height="19" fill="#4450b8"/><path d="M7 6l5-2M7 10l5-2M7 14l5-2M7 18l5-2" stroke="#cfd3f0"/><path d="M12 17h7v-3l6 5-6 5v-3h-7z" fill="#3a62d0"/><path d="M4 22l4 2 5-2" stroke="#e0c030" stroke-width="1.6" fill="none"/></svg></button></div>
          </div>

          <div class="card c-ms">
            <div class="card-h"><span>描述</span><svg width="12" height="9" viewBox="0 0 12 9"><path d="M1 1l5 6 5-6" fill="none" stroke="#2f86b8" stroke-width="2"/></svg></div>
          </div>

          <div class="card c-xx">
            <div class="card-h"><span>选项</span><svg width="12" height="9" viewBox="0 0 12 9"><path d="M1 8l5-6 5 6" fill="none" stroke="#2f86b8" stroke-width="2"/></svg></div>
            <div class="line big-l g2"><label>颜色</label><button class="sq big-b"><svg width="26" height="24" viewBox="0 0 26 24"><path d="M2 11C2 4 10 1 16 2c6 1 9 5 8 10-1 6-7 10-11 9-3 0-2-4-5-4s-6-1-6-6z" fill="#f3dfc2" stroke="#96765a"/><circle cx="9" cy="6" r="2" fill="#2a9fe8"/><circle cx="15" cy="5" r="2" fill="#f5e32b"/><rect x="18" y="8" width="4" height="3" fill="#e83a2a"/><rect x="18" y="12" width="4" height="3" fill="#2fcf3f"/><circle cx="14" cy="17" r="2.3" fill="#1a3fd8"/></svg></button></div>
            <div class="line big-l g3"><label>编辑显示</label><button class="sq big-b"><svg width="26" height="24" viewBox="0 0 26 24"><path d="M7 3h3M12 3h3M17 3h3" stroke="#222"/><circle cx="6" cy="11" r="3" fill="none" stroke="#223388"/><circle cx="21" cy="11" r="3" fill="none" stroke="#223388"/><path d="M3 11h6M11 11h3M18 11h6" stroke="#222"/><rect x="3" y="16" width="6" height="6" rx="3" fill="none" stroke="#223388"/><rect x="18" y="16" width="6" height="6" rx="3" fill="none" stroke="#223388"/><path d="M9 16h9M9 22h9" stroke="#b02020" stroke-dasharray="1 1"/></svg></button></div>
          </div>

          <div class="more-line"><i></i></div>
          <div class="dlg-btns">
            <button class="ok">确定</button>
            <button class="cancel">取消</button>
          </div>
        </div>
      </div>
    </main>

    <footer class="status">
      <span class="st-l">指定参数</span>
      <span class="st-m">当前: MILL_ROUGH</span>
      <span class="st-r">CSDN @hjhcos</span>
      <svg class="st-badge" width="13" height="15" viewBox="0 0 13 15"><path d="M1 3V1h2M10 1h2v2M1 12v2h2M10 14h2v-2" stroke="#666" fill="none"/><rect x="2.5" y="2.5" width="8" height="10" fill="#fff" stroke="#555"/><rect x="4" y="5" width="5" height="6" fill="#3a78d8"/></svg>
    </footer>
    <div class="taskstrip"></div>
  </div>
</template>

<style>
html, body { margin: 0; overflow: hidden; background: #fff; }
</style>

<style scoped>
.app {
  width: 1920px;
  height: 1040px;
  display: flex;
  flex-direction: column;
  overflow: hidden;
  font-family: "Noto Sans", "Noto Sans CJK SC", sans-serif;
  font-size: 12px;
  color: #222;
  background: #fff;
}
.defs { position: absolute; width: 0; height: 0; }
svg { display: block; flex: none; }
i { display: block; }

.caret {
  width: 0;
  height: 0;
  border-left: 3.5px solid transparent;
  border-right: 3.5px solid transparent;
  border-top: 4px solid #222;
}
.slot { display: flex; align-items: center; justify-content: center; flex: none; }
.vsep { width: 1px; height: 20px; background: #d8d8d8; flex: none; }
.vsep.light { height: 17px; }
.qdim { opacity: .75; }
.dimmed { color: #bdbdbd; }
.dimmed svg { filter: grayscale(1); opacity: .62; }

/* title bar */
.titlebar { height: 26px; display: flex; align-items: center; padding-left: 4px; position: relative; flex: none; }
.nx { width: 37px; font: 700 20px "Liberation Sans", sans-serif; color: #7d93a8; letter-spacing: .3px; }
.win-label { font-size: 11.5px; color: #111; margin-left: 0; width: 24px; }
.win-caret { margin-left: 4px; }
.win-more { margin-left: 5px; padding-bottom: 2px; border-top: 1px solid #222; }
.doc-title { position: absolute; left: 766px; top: 4px; font-size: 12.4px; line-height: 18px; white-space: nowrap; color: #111; }
.gap1 { margin-left: 11px; }
.gap2 { margin-left: 23px; }
.siemens { position: absolute; left: 1766px; top: 5px; font: 700 12.5px/16px "Liberation Sans", sans-serif; color: #009a9a; letter-spacing: .6px; }
.ctl { position: absolute; display: block; }
.ctl.min { left: 1855px; top: 18px; width: 8px; height: 2px; background: #333; }
.ctl.rest { left: 1877px; top: 8px; width: 12px; height: 12px; }
.ctl.rest i { position: absolute; left: 0; bottom: 0; width: 7px; height: 7px; border: 1px solid #333; box-shadow: 3px -3px 0 -1px #fff, 3px -3px 0 0 #333; background: #fff; }
.ctl-x { position: absolute; left: 1899px; top: 6px; }

/* tabs */
.tabbar { height: 28px; background: #c8d8d5; display: flex; align-items: stretch; flex: none; position: relative; }
.file-tab { width: 81px; background: #5b8a82; color: #fff; font-size: 12.5px; line-height: 28px; text-align: center; margin-right: 2px; }
.tab { padding: 0 13px; font-size: 13px; line-height: 28px; color: #222; }
.tab.on { background: #fff; color: #2a8ac4; border-top: 1px solid #ddd; line-height: 26px; }
.tab-right { position: absolute; left: 1592px; top: 4px; width: 328px; height: 20px; display: flex; align-items: center; }
.search { width: 125px; height: 20px; box-sizing: border-box; background: #fff; border: 1px solid #aaa; display: flex; align-items: center; justify-content: space-between; padding: 0 3px 0 1px; font-size: 12px; color: #111; }
.tr1 { margin-left: 11px; }
.tr2 { margin-left: 11px; }
.tr3 { margin-left: 12px; }
.tr4 { margin-left: 11px; }
.tut { margin-left: 4px; font-size: 11px; color: #222; }
.ctl.min.m2 { left: 265px; top: 15px; }
.ctl.rest.r2 { left: 285px; top: 4px; }
.x2 { position: absolute; left: 306px; top: 3px; }

/* ribbon */
.ribbon { height: 95px; display: flex; box-sizing: border-box; border-bottom: 2px solid #dedede; position: relative; flex: none; }
.rb-group { box-sizing: border-box; height: 86px; margin-top: 5px; border-right: 1px solid #dcdcdc; display: flex; flex-direction: column; flex: none; }
.rb-body { height: 73px; margin-top: -1px; display: flex; flex: none; }
.rb-label { height: 14px; position: relative; padding-right: 18px; text-align: center; font-size: 11px; line-height: 14px; color: #2a8ac4; white-space: nowrap; }
.rb-label .caret { position: absolute; right: 7px; top: 5px; }
.rb-end { position: absolute; right: 5px; top: 82px; }
.big { display: flex; flex-direction: column; align-items: center; flex: none; font-size: 11px; color: #222; }
.big.dimmed { color: #c2c2c2; }
.big-ic { height: 35px; width: 100%; display: flex; align-items: center; justify-content: center; box-sizing: border-box; }
.big-ic.boxed { width: 37px; border: 1px solid #ececec; border-radius: 3px; }
.big-tx { margin-top: 2px; line-height: 15px; white-space: nowrap; }
.big-c { margin-top: 6px; }
.grid { display: grid; flex: none; justify-items: center; align-items: center; align-content: start; margin-top: -3px; height: 72px; }
.cell { display: flex; }
.side { flex: none; margin-top: -2px; }
.side-row { height: 21.5px; display: flex; align-items: center; font-size: 11px; gap: 4px; color: #c2c2c2; }
.mini { display: flex; flex-direction: column; gap: 8px; padding-top: 6px; flex: none; }
.mini-row { display: flex; align-items: center; height: 22px; }

/* toolbar */
.toolbar { height: 31px; display: flex; align-items: center; box-sizing: border-box; border-bottom: 2px solid #9a9a9a; position: relative; flex: none; }
.tb-sec { height: 24px; display: flex; align-items: center; border-right: 1px solid #dcdcdc; box-sizing: border-box; flex: none; }
.tb-sec.menu { width: 87px; padding-left: 9px; }
.menu-tx { font-size: 11.5px; margin: 0 5px 0 3px; color: #111; white-space: nowrap; }
.tb-sec.s2 { width: 113px; padding-left: 8px; }
.tb-sec.s3 { width: 64px; padding-left: 8px; }
.tb-sec.s4 { width: 525px; padding-left: 13px; }
.tb-sec.s5 { width: 238px; padding-left: 8px; }
.select { height: 20px; box-sizing: border-box; border: 1px solid #aaa; background: #fff; display: flex; align-items: center; justify-content: space-between; padding: 0 6px 0 2px; flex: none; font-size: 11.5px; color: #bbb; }
.sel1 { width: 132px; margin-right: 9px; justify-content: flex-end; }
.sel2 { width: 139px; margin-right: 6px; }
.sel-c { width: 0; height: 0; border-left: 4px solid transparent; border-right: 4px solid transparent; border-top: 5px solid #aaa; }
.tb-end { position: absolute; right: 5px; top: 13px; }

/* main */
.work { height: 830px; display: flex; flex: none; }
.rail { width: 32px; box-sizing: border-box; background: #dcdcdc; border-right: 1px solid #aaa; flex: none; padding-top: 5px; }
.rail-gear { margin: 0 0 20px 7px; }
.rail-item { display: flex; align-items: center; justify-content: center; padding-left: 3px; box-sizing: border-box; }
.rail-item.active { background: #fff; border: 1px solid #aaa; border-right: 0; margin-left: 2px; width: 30px; padding-left: 0; }

.nav { width: 444px; box-sizing: border-box; padding: 0 5px 0 6px; border-right: 1px solid #aaa; flex: none; }
.nav-head { height: 28px; display: flex; align-items: center; justify-content: space-between; padding: 2px 7px 0 4px; box-sizing: border-box; font-size: 11.5px; color: #222; }
.maxbox { width: 10px; height: 8px; border: 1px solid #222; border-top-width: 3px; }
.table { width: 428px; height: 743px; box-sizing: border-box; border: 1px solid #dcdcdc; border-bottom: 0; overflow: hidden; display: flex; flex-direction: column; }
.thead { height: 22px; display: flex; flex: none; background: #f0f0f0; border-bottom: 1px solid #cfcfcf; box-sizing: border-box; font-size: 12px; color: #333; line-height: 21px; }
.thead span { padding-left: 6px; box-sizing: border-box; border-right: 1px solid #dcdcdc; overflow: hidden; white-space: nowrap; }
.c1 { width: 200px; flex: none; box-sizing: border-box; }
.c2 { width: 100px; flex: none; box-sizing: border-box; border-right: 1px solid #ececec; }
.c3 { width: 26px; flex: none; box-sizing: border-box; }
.thead .c1 { width: 200px; }
.thead .c3 { border-right: 0; }
.tbody { height: 700px; position: relative; overflow: hidden; flex: none; }
.row { height: 20px; display: flex; box-sizing: border-box; border-bottom: 1px solid #ececec; background: #fff; font-size: 12.2px; line-height: 19px; color: #222; }
.row:nth-child(even) { background: #f9f9f9; }
.root { padding-left: 4px; }
.node { display: flex; align-items: center; padding-left: 10px; }
.twig { width: 9px; border-top: 1px dotted #777; flex: none; }
.node-tx { flex: 1; margin-left: 1px; padding-left: 3px; align-self: stretch; white-space: nowrap; }
.row.sel { background: transparent !important; border-bottom-color: #fff; }
.row.sel .node-tx, .row.sel .c2, .row.sel .c3 { background: #3399ff; color: #fff; }
.row.sel .c2 { border-right-color: #fff; }
.tree-v { position: absolute; left: 10px; top: 29px; height: 82px; border-left: 1px dotted #777; }
.black-line { position: absolute; left: 200px; top: 0; bottom: 0; width: 1px; background: #111; }
.hscroll { flex: 1; background: #efefef; position: relative; border-top: 1px solid #fff; }
.hscroll i { position: absolute; left: 18px; top: 8px; width: 275px; height: 2px; background: #888; }
.splitter { height: 5px; width: 428px; box-sizing: border-box; background: #ccc; border: 1px solid #aaa; margin-top: -1px; }
.fold { width: 428px; height: 24px; box-sizing: border-box; border-bottom: 2px solid #d4d4d4; display: flex; align-items: center; justify-content: space-between; padding: 3px 6px 0 7px; font-size: 14px; color: #3a93c8; }
.fold:first-of-type { height: 23px; }

.view { flex: 1; position: relative; box-sizing: border-box; border: 1px solid #c84a4a; border-top-color: #bbb; overflow: hidden;
  background: linear-gradient(180deg, #b8b9bb 0, #c9cacb 35%, #e5e6e8 80%, #e9e9eb 100%); }
.scene { position: absolute; left: -1px; top: -1px; }

/* dialog */
.dialog { position: absolute; left: 58px; top: 70px; width: 328px; height: 486px; box-sizing: border-box; background: #e7e7e7; border: 1px solid #bcbcbc; border-top: 0; }
.dlg-title { height: 24px; margin: 0 -1px; background: #5b8a82; color: #fff; display: flex; align-items: center; padding: 0 8px; font-size: 13px; }
.dlg-title span { margin-left: 9px; }
.dlg-x { margin-left: auto; margin-right: 1px; }
.card { margin: 4px 5px 0; background: #fff; border-bottom: 2px solid #c9c9c9; box-sizing: border-box; position: relative; }
.c-yu { height: 62px; }
.c-gc { height: 87px; }
.c-dg { height: 104px; }
.c-ms { height: 23px; }
.c-xx { height: 104px; }
.card-h { height: 26px; box-sizing: border-box; display: flex; align-items: center; justify-content: space-between; padding: 0 6px 2px 7px; font-size: 14px; color: #3a93c8; }
.line { height: 23px; display: flex; align-items: center; padding-left: 9px; font-size: 12.3px; color: #222; margin-top: 4px; }
.line.l2 { margin-top: 3px; }
.line label { flex: 1; }
.num { width: 82px; height: 23px; box-sizing: border-box; border: 1px solid #aaa; background: #fff; padding: 2px 4px 2px 21px; flex: none; }
.num b { display: block; height: 17px; overflow: hidden; white-space: nowrap; font: 14px/17px "DejaVu Sans", sans-serif; letter-spacing: 1.1px; word-spacing: -2px; color: #333; }
.line.l2 .num { margin-right: 35px; }
.num.on { padding: 2px 3px; }
.num.on b { background: #0078d7; color: #fff; padding-left: 17px; border-left: 1px solid #e06a20; }
.sq { width: 24px; height: 23px; margin: 0 9px 0 2px; padding: 0; box-sizing: border-box; border: 1px solid #aaa; background: #fff; display: flex; align-items: center; justify-content: center; flex: none; }
.big-b { width: 32px; height: 32px; margin: 0 9px 0 0; }
.line.big-l { height: 32px; margin-top: 4px; }
.line.big-l.g1 { margin-top: 2px; }
.line.big-l.g2 { margin-top: 4px; }
.line.big-l.g3 { margin-top: 2px; }
.more-line { margin: 0 5px; height: 17px; box-sizing: border-box; padding-top: 4px; border-bottom: 1px solid #cfcfcf; display: flex; justify-content: center; align-items: center; }
.more-line i { width: 0; height: 0; border-left: 5px solid transparent; border-right: 5px solid transparent; border-bottom: 5px solid #222; }
.dlg-btns { display: flex; padding: 9px 0 0 198px; gap: 5px; }
.dlg-btns button { width: 54px; height: 25px; box-sizing: border-box; font: 12px "Noto Sans", "Noto Sans CJK SC", sans-serif; color: #222; padding: 0; }
.ok { background: #9acce8; border: 1px solid #4f9fd0; }
.cancel { background: #c6c7ca; border: 1px solid #a8a8a8; }

/* status */
.status { height: 22px; position: relative; border-top: 1px solid #aaa; box-sizing: border-box; background: #fff; flex: none; font-size: 11px; line-height: 18px; color: #111; font-weight: 500; }
.st-l { position: absolute; left: 3px; }
.st-m { position: absolute; left: 916px; font-weight: 700; }
.st-r { position: absolute; left: 1828px; top: 1px; font-size: 10.5px; font-weight: 400; color: #9a9a9a; }
.st-badge { position: absolute; left: 1850px; top: 1px; }
.taskstrip { flex: 1; background: linear-gradient(90deg, #d4e4d4 0, #dcecb8 380px, #e6f4a8 640px, #dbeeb0 900px, #e8f5a8 1180px, #cfe8cc 1480px, #d4dcd4 1650px, #d8d8d8 100%); }
</style>
